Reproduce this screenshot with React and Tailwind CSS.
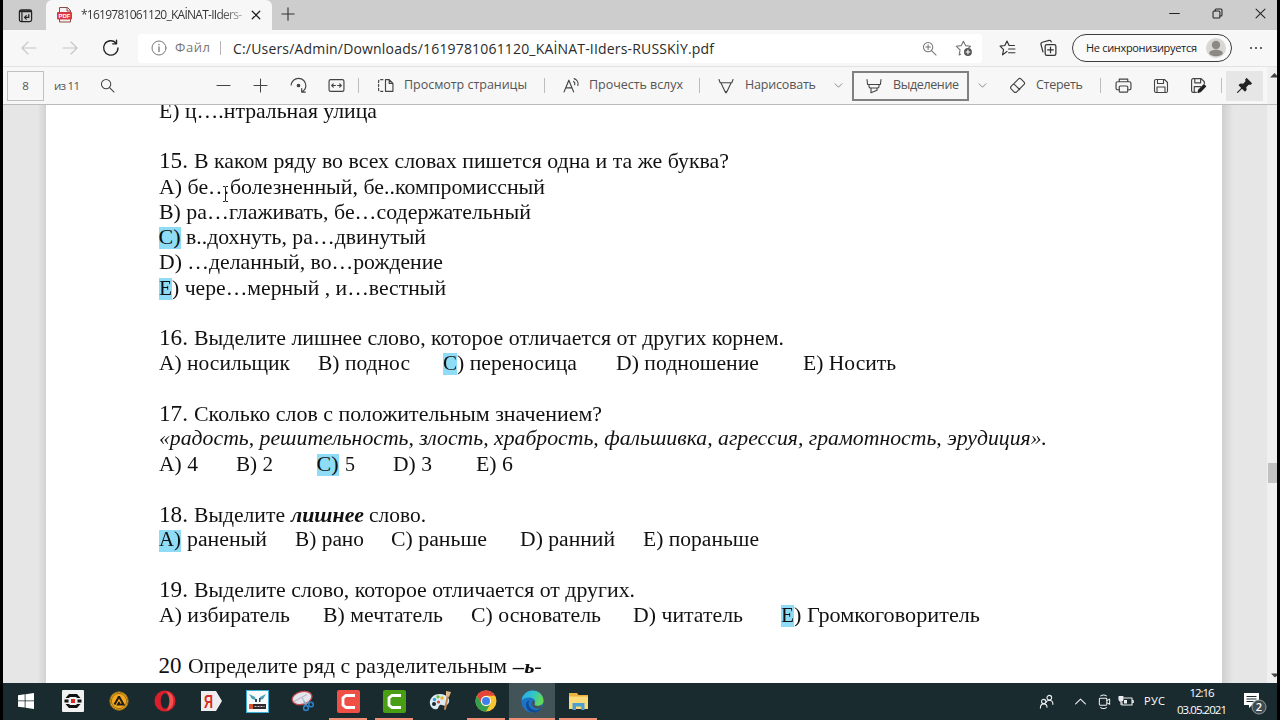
import React, { useLayoutEffect, useRef } from 'react';

const HL = 'bg-[#8fdcf6] leading-[19px] pb-[3px]';

// Fits a run of text to the width given by its class,
// either by letter spacing or by stretching the glyphs
function Run({ className = '', stretch = false, children }) {
  const outer = useRef(null);
  const inner = useRef(null);

  useLayoutEffect(() => {
    const el = inner.current;
    el.style.letterSpacing = '0px';
    el.style.transform = 'none';
    const target = outer.current.clientWidth;
    const natural = el.getBoundingClientRect().width;
    if (stretch) {
      el.style.transform = `scaleX(${target / natural})`;
    } else {
      const gaps = Math.max(el.textContent.length - 1, 1);
      el.style.letterSpacing = `${(target - natural) / gaps}px`;
    }
  }, [children, stretch]);

  return (
    <span ref={outer} className={`block shrink-0 whitespace-pre ${className}`}>
      <span ref={inner} className="inline-block origin-left">{children}</span>
    </span>
  );
}

function Doc({ className, children }) {
  return <Run stretch className={className}>{children}</Run>;
}

function Row({ className = 'text-[22px]', children }) {
  return (
    <div className={`flex h-[25.23px] shrink-0 items-baseline leading-[25.23px] ${className}`}>{children}</div>
  );
}

function Num({ children, className = 'mr-[6px] w-[29px]' }) {
  return <Doc className={`text-[23px] ${className}`}>{children}</Doc>;
}

function Icon({ className = '', size = 16, stroke = '#444', sw = 1.1, children }) {
  return (
    <svg
      className={`block shrink-0 ${className}`}
      width={size}
      height={size}
      viewBox="0 0 16 16"
      fill="none"
      stroke={stroke}
      strokeWidth={sw}
      strokeLinecap="round"
      strokeLinejoin="round"
    >
      {children}
    </svg>
  );
}

function TabBar() {
  return (
    <div className="flex h-[30px] shrink-0 items-end bg-[#cdcdcd]">
      <div className="flex h-full w-[43px] items-center pl-[15px]">
        <Icon size={15} stroke="#222" sw={1.3}>
          <rect x="1.5" y="2" width="13" height="12.5" rx="2" />
          <path d="M2.5 3.5h11" strokeWidth="2" />
          <path d="M4.2 5v9" />
          <path d="M11.5 7v3H7m1.8-1.8L7 10l1.8 1.8" />
        </Icon>
      </div>
      <div className="flex h-[30px] w-[226px] items-center rounded-t-[6px] bg-[#f7f7f7]">
        <svg className="ml-[11px] shrink-0" width="16" height="18" viewBox="0 0 16 18">
          <path d="M2.500 1.500h8l3 3v11.500h-11z" fill="#f5f1f1" stroke="#8b4a4a" />
          <path d="M10 1.500v3.500h3.500" fill="none" stroke="#8b4a4a" />
          <rect x="0" y="6" width="15" height="7.500" rx="1" fill="#d9363e" />
          <text x="7.500" y="11.900" textAnchor="middle" fontSize="6" fontWeight="700" fill="#fff" fontFamily="Liberation Sans, sans-serif">
            PDF
          </text>
        </svg>
        <Run className="ml-[8px] w-[161px] bg-gradient-to-r from-[#333] from-85% to-[#aaa] bg-clip-text text-[12px] text-transparent">
          *1619781061120_KAİNAT-IIders-
        </Run>
        <Icon className="ml-[9px]" size={10} stroke="#222" sw={2}>
          <path d="M2 2l12 12M14 2L2 14" />
        </Icon>
      </div>
      <Icon className="mb-[9px] ml-[9px]" size={14} stroke="#333" sw={1.3}>
        <path d="M8 1v14M1 8h14" />
      </Icon>
      <div className="ml-auto flex h-full items-center pb-[4px]">
        <Icon size={11} stroke="#222" sw={1.6}>
          <path d="M1 8h14" />
        </Icon>
        <Icon className="ml-[32px]" size={11} stroke="#222" sw={1.5}>
          <rect x="1.500" y="4.500" width="10" height="10" rx="1.500" />
          <path d="M4.500 4.500V3a1.500 1.500 0 0 1 1.500-1.500h7A1.500 1.500 0 0 1 14.500 3v7a1.500 1.500 0 0 1-1.500 1.500h-1.500" />
        </Icon>
        <Icon className="ml-[32px] mr-[11px]" size={11} stroke="#222" sw={1.5}>
          <path d="M1.500 1.500l13 13M14.500 1.500l-13 13" />
        </Icon>
      </div>
    </div>
  );
}

function AddressBar() {
  return (
    <div className="flex h-[37px] shrink-0 items-center border-b border-[#e2e2e2] bg-[#f7f7f7]">
      <Icon className="ml-[18px]" stroke="#c6c6c6" sw={1.1}>
        <path d="M15 8H1m6-6L1 8l6 6" />
      </Icon>
      <Icon className="ml-[25px]" stroke="#c6c6c6" sw={1.1}>
        <path d="M1 8h14M9 2l6 6-6 6" />
      </Icon>
      <Icon className="ml-[24px]" size={18} stroke="#222" sw={1.2}>
        <path d="M14.200 8a6.400 6.400 0 1 1-1.800-4.500M12.900 1v3.300H9.500" />
      </Icon>
      <div className="ml-[18px] flex h-[29px] w-[844px] items-center rounded-[3px] bg-white">
        <Icon className="ml-[13px]" stroke="#777" sw={1}>
          <circle cx="8" cy="8" r="7" />
          <path d="M8 7v4.500M8 4.500v.3" strokeWidth="1.300" />
        </Icon>
        <Run className="ml-[8px] w-[35px] text-[13px] text-[#777]">Файл</Run>
        <div className="ml-[10px] h-[14px] w-px bg-[#b5b5b5]" />
        <Run className="ml-[12px] w-[481px] text-[14px] text-[#2b2b2b]">
          C:/Users/Admin/Downloads/1619781061120_KAİNAT-IIders-RUSSKİY.pdf
        </Run>
        <Icon className="ml-[208px]" size={15} stroke="#777" sw={1.1}>
          <circle cx="6.500" cy="6.500" r="5" />
          <path d="M10.200 10.200L15 15M6.500 4v5M4 6.500h5" />
        </Icon>
        <Icon className="ml-[18px]" size={18} stroke="#777" sw={1}>
          <path d="M5 13.500l-1.300.7.800-4.500L1.200 6.500l4.300-.6L7.500 2l2 3.900 4.300.6-1.500 1.300" />
          <circle cx="11.500" cy="11.500" r="3.500" fill="#555" stroke="none" />
          <path d="M11.500 9.800v3.400M9.800 11.500h3.400" stroke="#fff" />
        </Icon>
      </div>
      <Icon className="ml-[17px]" size={17} stroke="#333" sw={1.1}>
        <path d="M7.500 10.800L3.300 14l1-5L1 5.800l4.500-.6L7.500 1l2 4.200h5M9 8.500h6M9 12h6" />
      </Icon>
      <Icon className="ml-[23px]" size={18} stroke="#333" sw={1.1}>
        <rect x="5.500" y="5" width="9.500" height="9.500" rx="1.500" />
        <path d="M10.250 7.200v5M7.700 9.700h5M3.500 11.500L1.800 5c-.3-1.200.2-1.800 1.200-2.100L9 1.300c1-.2 1.600.1 1.900 1.200" />
      </Icon>
      <div className="ml-[15px] flex h-[28px] w-[160px] items-center rounded-full border border-[#3c3c3c] bg-[#fafafa]">
        <Run className="ml-[13px] w-[111px] text-[11px] text-[#222]">Не синхронизируется</Run>
        <svg className="ml-[9px] shrink-0" width="20" height="20" viewBox="0 0 20 20">
          <circle cx="10" cy="10" r="10" fill="#d9d7d3" />
          <circle cx="10" cy="7" r="4.200" fill="#8c8984" />
          <ellipse cx="10" cy="15" rx="6.800" ry="3.300" fill="#8c8984" />
        </svg>
      </div>
      <div className="ml-[18px] flex gap-[3px]">
        <span className="size-[2px] rounded-full bg-[#333]" />
        <span className="size-[2px] rounded-full bg-[#333]" />
        <span className="size-[2px] rounded-full bg-[#333]" />
      </div>
    </div>
  );
}

function Sep({ className }) {
  return <div className={`h-[15px] w-px shrink-0 bg-[#bdbdbd] ${className}`} />;
}

function Toolbar() {
  return (
    <div className="flex h-[38px] shrink-0 items-center border-b border-[#bcbcbc] bg-[#f7f7f7] text-[12.5px] text-[#555]">
      <div className="ml-[4px] flex h-[30px] w-[37px] shrink-0 items-center justify-center border border-[#c0c0c0] text-[11.5px]">8</div>
      <Run className="ml-[10px] w-[26px] text-[11.5px]">из 11</Run>
      <Icon className="ml-[20px]" size={15}>
        <circle cx="6.500" cy="6.500" r="5" />
        <path d="M10.200 10.200L15 15" />
      </Icon>
      <Icon className="ml-[101px]" size={15}>
        <path d="M1 8h14" />
      </Icon>
      <Icon className="ml-[22px]" size={15}>
        <path d="M8 1v14M1 8h14" />
      </Icon>
      <Icon className="ml-[22px]" size={17}>
        <path d="M1 7.500C1.500 3.800 4.500 1.300 8 1.300c4 0 6.900 3 6.900 6.700 0 2.700-1.500 4.800-3.700 6M11 10.800V14.200h3.500" />
        <circle cx="8" cy="8" r="1.200" fill="#444" />
      </Icon>
      <Icon className="ml-[21px]" size={17}>
        <rect x="1" y="2.500" width="14" height="11" rx="1.500" />
        <path d="M7 8H3.500M5 6.500L3.500 8 5 9.500M9 8h3.500M11 6.500L12.500 8 11 9.500" />
      </Icon>
      <Sep className="ml-[13px]" />
      <Icon className="ml-[18px]" size={17}>
        <path d="M8 2.500h3.500L15 6v7.500H8zM11.500 2.500V6H15" />
        <path d="M5.500 2.500H3A1.500 1.500 0 0 0 1.500 4v8A1.500 1.500 0 0 0 3 13.500h2.500" strokeDasharray="2 1.800" />
      </Icon>
      <Run className="ml-[10px] w-[123px]">Просмотр страницы</Run>
      <Sep className="ml-[17px]" />
      <Icon className="ml-[18px]" size={17}>
        <path d="M1 14L5.500 3 10 14M2.600 10.300h5.800M10 4.200c1 .7 1.400 2 1 3.100M10.500 1.500c2.800 1 4.200 3.800 3.500 6.500" />
      </Icon>
      <Run className="ml-[9px] w-[94px]">Прочесть вслух</Run>
      <Sep className="ml-[16px]" />
      <Icon className="ml-[18px]" size={16}>
        <path d="M1 1.500l1.200 3.300h11.600L15 1.500M3 5l4 8.500h2L13 5M7 13.500l1 1.500 1-1.500" />
      </Icon>
      <Run className="ml-[11px] w-[71px]">Нарисовать</Run>
      <Icon className="ml-[18px]" size={9} stroke="#777" sw={1.5}>
        <path d="M2 5l6 6 6-6" />
      </Icon>
      <div className="ml-[9px] flex h-[30px] w-[117px] shrink-0 items-center border-2 border-[#808080]">
        <Icon className="ml-[12px]" size={16}>
          <path d="M1 1.500l.6 5h12.800l.6-5M3 6.500v2.200c0 .8.800 1.300 2 1.300h6c1.200 0 2-.5 2-1.300V6.500M5 10v4.800l6-2.500V10" />
        </Icon>
        <Run className="ml-[11px] w-[66px]">Выделение</Run>
      </div>
      <Icon className="ml-[9px]" size={9} stroke="#777" sw={1.5}>
        <path d="M2 5l6 6 6-6" />
      </Icon>
      <Icon className="ml-[22px]" size={17}>
        <path d="M2 8.800L9 1.800c.7-.7 1.500-.7 2.200 0l3 3c.7.700.7 1.500 0 2.200l-7.400 7.400H5.200L2 11.200c-.7-.8-.7-1.600 0-2.400zM4.500 6.500l5.500 5.300" />
      </Icon>
      <Run className="ml-[10px] w-[47px]">Стереть</Run>
      <Sep className="ml-[17px]" />
      <Icon className="ml-[14px]" size={17}>
        <path d="M4 4.500V2h8v2.500M4 12H2.500A1.500 1.500 0 0 1 1 10.500V6a1.500 1.500 0 0 1 1.500-1.500h11A1.500 1.500 0 0 1 15 6v4.500a1.500 1.500 0 0 1-1.500 1.500H12" />
        <rect x="4" y="8.500" width="8" height="5.800" rx="1" />
      </Icon>
      <Icon className="ml-[21px]" size={16}>
        <path d="M3 1.500h8.500l3 3V13a1.500 1.500 0 0 1-1.500 1.500H3A1.500 1.500 0 0 1 1.500 13V3A1.500 1.500 0 0 1 3 1.500zM4.500 1.500v4h6v-4M4 14.500V9h8v5.500" />
      </Icon>
      <Icon className="ml-[21px]" size={17}>
        <path d="M6 14.500H3A1.500 1.500 0 0 1 1.500 13V3A1.500 1.500 0 0 1 3 1.500h7.500l3 3V6M4.500 1.500v4h5.500v-4M4 14.500V9h6" />
        <path d="M7.500 14.500l.6-2.200 5-5 1.600 1.600-5 5z" fill="#222" stroke="#222" />
      </Icon>
      <Sep className="ml-[14px]" />
      <div className="ml-[4px] flex h-[30px] w-[37px] shrink-0 items-center justify-center bg-[#e6e6e6]">
        <Icon size={17} stroke="#222" sw={1}>
          <path d="M10 1.500L14.500 6l-1 .8-1.500-.3-2.800 2.800.3 2.700-1 1.200L3 7.700l1.200-1 2.700.2L9.500 4.200 9.200 2.500z" fill="#222" />
          <path d="M5.500 10.500l-4 4" />
        </Icon>
      </div>
      <div className="ml-auto flex h-full w-[10px] items-start justify-end bg-[#f0f0f0] pt-[6px]">
        <svg width="7" height="5" viewBox="0 0 7 5">
          <path d="M0 4.500L4.500 0 7 2.500v2z" fill="#444" />
        </svg>
      </div>
    </div>
  );
}

function PdfPage() {
  return (
    <div className="flex min-h-0 flex-1 bg-[#e6e6e6]">
      <div className="w-[43px] shrink-0 bg-gradient-to-r from-[#e6e6e6] from-80% to-[#d3d3d3]" />
      <div className="relative w-[1176px] shrink-0 overflow-hidden bg-white pl-[112.5px] font-['Liberation_Serif','Times_New_Roman',serif] text-[#111]">
        <div className="-mt-[7px] flex flex-col">
          <Row>
            <Doc className="w-[218px]">Е) ц….нтральная улица</Doc>
          </Row>
          <Row />
          <Row className="text-[21px]">
            <Num>15.</Num>
            <Doc className="w-[535px]">В каком ряду во всех словах пишется одна и та же буква?</Doc>
          </Row>
          <Row>
            <Doc className="w-[386px]">А) бе…болезненный, бе..компромиссный</Doc>
          </Row>
          <Row>
            <Doc className="w-[372px]">В) ра…глаживать, бе…содержательный</Doc>
          </Row>
          <Row>
            <Doc className={`w-[22px] ${HL}`}>С)</Doc>
            <Doc className="ml-[5px] w-[240px]">в..дохнуть, ра…двинутый</Doc>
          </Row>
          <Row>
            <Doc className="w-[284px]">D) …деланный, во…рождение</Doc>
          </Row>
          <Row>
            <Doc className={`w-[13px] ${HL}`}>Е</Doc>
            <Doc className="w-[274px]">) чере…мерный , и…вестный</Doc>
          </Row>
          <Row />
          <Row className="text-[21px]">
            <Num>16.</Num>
            <Doc className="w-[590px]">Выделите лишнее слово, которое отличается от других корнем.</Doc>
          </Row>
          <Row>
            <Doc className="w-[131px]">А) носильщик</Doc>
            <Doc className="ml-[28px] w-[92px]">В) поднос</Doc>
            <Doc className={`ml-[33px] w-[14px] ${HL}`}>С</Doc>
            <Doc className="w-[120px]">) переносица</Doc>
            <Doc className="ml-[39px] w-[143px]">D) подношение</Doc>
            <Doc className="ml-[44px] w-[93px]">Е) Носить</Doc>
          </Row>
          <Row />
          <Row className="text-[21px]">
            <Num>17.</Num>
            <Doc className="w-[408px]">Сколько слов с положительным значением?</Doc>
          </Row>
          <Row className="text-[21px] italic">
            <Doc className="w-[888px]">
              «радость, решительность, злость, храбрость, фальшивка, агрессия, грамотность, эрудиция».
            </Doc>
          </Row>
          <Row>
            <Doc className="w-[39px]">А) 4</Doc>
            <Doc className="ml-[38px] w-[37px]">В) 2</Doc>
            <Doc className={`ml-[44px] w-[22px] ${HL}`}>С)</Doc>
            <Doc className="ml-[6px] w-[10px]">5</Doc>
            <Doc className="ml-[38px] w-[39px]">D) 3</Doc>
            <Doc className="ml-[44px] w-[37px]">Е) 6</Doc>
          </Row>
          <Row />
          <Row className="text-[21px]">
            <Num>18.</Num>
            <Doc className="w-[91px]">Выделите</Doc>
            <Doc className="ml-[6px] w-[73px] font-bold italic">лишнее</Doc>
            <Doc className="ml-[5px] w-[57px]">слово.</Doc>
          </Row>
          <Row className="text-[20px]">
            <Doc className={`w-[22px] ${HL}`}>А)</Doc>
            <Doc className="ml-[6px] w-[80px]">раненый</Doc>
            <Doc className="ml-[28px] w-[69px]">В) рано</Doc>
            <Doc className="ml-[27px] w-[96px]">С) раньше</Doc>
            <Doc className="ml-[33px] w-[95px]">D) ранний</Doc>
            <Doc className="ml-[28px] w-[116px]">Е) пораньше</Doc>
          </Row>
          <Row />
          <Row className="text-[21px]">
            <Num>19.</Num>
            <Doc className="w-[441px]">Выделите слово, которое отличается от других.</Doc>
          </Row>
          <Row>
            <Doc className="w-[131px]">А) избиратель</Doc>
            <Doc className="ml-[33px] w-[120px]">В) мечтатель</Doc>
            <Doc className="ml-[28px] w-[130px]">С) основатель</Doc>
            <Doc className="ml-[32px] w-[110px]">D) читатель</Doc>
            <Doc className={`ml-[38px] w-[13px] ${HL}`}>Е</Doc>
            <Doc className="w-[186px]">) Громкоговоритель</Doc>
          </Row>
          <Row />
          <Row className="text-[21px]">
            <Num className="mr-[6px] w-[23px]">20</Num>
            <Doc className="w-[319px]">Определите ряд с разделительным</Doc>
            <Doc className="ml-[6px] w-[29px] text-[19px] font-bold italic">–ь-</Doc>
          </Row>
        </div>
        {/* text cursor */}
        <svg className="absolute left-[176px] top-[81px]" width="8" height="16" viewBox="0 0 8 16" fill="none" stroke="#222">
          <path d="M1 .5h2l.5.5.5-.5h2M3.500 1v14M1 15.500h2l.5-.5.5.5h2" />
        </svg>
      </div>
      <div className="flex-1 bg-gradient-to-r from-[#cfcfcf] to-[#e6e6e6] to-25%" />
      <div className="flex w-[10px] shrink-0 flex-col items-end justify-between bg-[#f0f0f0] pb-[5px] pt-[358px]">
        <div className="h-[20px] w-[9px] bg-[#c1c1c1]" />
        <svg width="6" height="5" viewBox="0 0 6 5">
          <path d="M0 .5h6v2L4 4.500z" fill="#444" />
        </svg>
      </div>
    </div>
  );
}

function Task({ running, active, children }) {
  return (
    <div className={`flex h-full w-[46px] shrink-0 flex-col items-center justify-between ${active ? 'bg-[#435459]' : ''}`}>
      <div className="flex flex-1 items-center justify-center pt-[1px]">{children}</div>
      <div className={`h-[2px] shrink-0 ${active ? 'w-full' : 'w-[38px]'} ${running ? 'bg-[#f08f76]' : ''}`} />
    </div>
  );
}

function Camtasia({ fill }) {
  return (
    <svg width="23" height="23" viewBox="0 0 23 23">
      <rect width="23" height="23" rx="2" fill={fill} />
      <path d="M18 5.500H9L6 8v7l3 2.500h9" fill="none" stroke="#fff" strokeWidth="2.800" />
    </svg>
  );
}

function Taskbar() {
  return (
    <div className="flex h-[37px] shrink-0 bg-[#1a2b30]">
      <Task>
        <svg width="16" height="16" viewBox="0 0 16 16" fill="#fff">
          <path d="M0 2.200l6.700-.9v6.200H0zM7.500 1.200L16 0v7.500H7.500zM0 8.300h6.700v6.300L0 13.700zM7.500 8.300H16V16l-8.500-1.200z" />
        </svg>
      </Task>
      <Task>
        <svg className="ml-[2px]" width="22" height="22" viewBox="0 0 22 22">
          <rect width="22" height="22" rx="1" fill="#f1f1f1" />
          <path d="M7 4h8l3.500 4h-3.500l-1-1H8L7 8H3.500zM7 18h8l3.500-4h-3.500l-1 1H8l-1-1H3.500z" fill="#111" />
          <path d="M2.500 9.500h4v3h-4zM15.500 9.500h4v3h-4z" fill="#111" />
          <rect x="9" y="9" width="4" height="4" fill="#d42a2a" />
        </svg>
      </Task>
      <Task>
        <svg className="ml-[2px]" width="20" height="20" viewBox="0 0 20 20">
          <circle cx="10" cy="10" r="9.200" fill="#f5a81c" stroke="#8c691e" strokeWidth="1" />
          <circle cx="10" cy="10" r="7.600" fill="none" stroke="#5d4415" strokeWidth=".6" />
          <path d="M10 5.500l4.500 8H9l1.500-2.500M10 5.500l-4.500 8" fill="none" stroke="#1c1c1c" strokeWidth="2" />
        </svg>
      </Task>
      <Task>
        <svg className="ml-[2px]" width="22" height="22" viewBox="0 0 22 22">
          <ellipse cx="11" cy="11" rx="10.500" ry="10.500" fill="#d91f2c" />
          <path d="M12 1a10.500 10.500 0 0 1 0 20c4-2 5-16 0-20z" fill="#f0554d" />
          <ellipse cx="11" cy="11" rx="4.300" ry="7.800" fill="#1a2b30" />
        </svg>
      </Task>
      <Task>
        <svg className="ml-[2px]" width="22" height="22" viewBox="0 0 22 22">
          <path d="M1 1h15l6 10-6 10H1z" fill="#eee" />
          <text x="4" y="18" fontSize="19" fontWeight="700" fill="#d92b22" fontFamily="Liberation Sans, sans-serif" textLength="9" lengthAdjust="spacingAndGlyphs">
            Я
          </text>
        </svg>
      </Task>
      <Task>
        <svg className="ml-[2px]" width="23" height="23" viewBox="0 0 23 23">
          <rect x=".5" y=".5" width="22" height="22" fill="#f7fbfc" stroke="#3daed6" />
          <path d="M3 4l6 3 1 3-4-1zM20 4l-6 3-1 3 4-1z" fill="#4a9fb8" />
          <path d="M9 9h2v3H9zM13 8h1.500v4H13z" fill="#284e60" />
          <rect x="3" y="14" width="17" height="5" fill="#30282c" />
          <path d="M3 14h4v5H3z" fill="#d7562c" />
          <path d="M8.500 16.500h10" stroke="#c9c9c9" strokeDasharray="2 1" />
        </svg>
      </Task>
      <Task>
        <svg className="ml-[2px]" width="24" height="22" viewBox="0 0 24 22">
          <ellipse cx="11" cy="8" rx="10" ry="6.300" fill="#e4e5ec" stroke="#c7494e" strokeWidth="1.300" transform="rotate(-14 11 8)" />
          <path d="M3 11.500l13-7M14 14L11 7" stroke="#b9bccb" strokeWidth="1.300" />
          <path d="M13 11l1.500 4M18 11l-3 3.500" stroke="#8fa6bd" strokeWidth="1.200" />
          <circle cx="15" cy="18" r="2.400" fill="none" stroke="#2f7fc2" strokeWidth="1.600" />
          <circle cx="20" cy="14.500" r="2.300" fill="none" stroke="#2f7fc2" strokeWidth="1.600" />
        </svg>
      </Task>
      <Task running>
        <Camtasia fill="#ef4f45" />
      </Task>
      <Task running>
        <Camtasia fill="#4a9e13" />
      </Task>
      <Task>
        <svg width="23" height="22" viewBox="0 0 23 22">
          <path d="M11 4C4 4 0 9 1 14c.8 4 4 6 7 5 2-.6 1-3 3-4s4 2 7 0c5-4 1-11-7-11z" fill="#dcebf3" />
          <circle cx="5" cy="14" r="2" fill="#1a2b30" />
          <circle cx="5.500" cy="9.500" r="1.700" fill="#3b9fe0" />
          <circle cx="9" cy="6.800" r="1.600" fill="#6bbd45" />
          <circle cx="13" cy="8" r="1.700" fill="#e8b425" />
          <circle cx="9.500" cy="12" r="1.600" fill="#d84545" />
          <path d="M19 5l-3 14" stroke="#c4884f" strokeWidth="2" strokeLinecap="round" />
          <path d="M17 1l5 1-2 5-3-1z" fill="#e2b88a" />
        </svg>
      </Task>
      <Task running>
        <svg width="22" height="22" viewBox="0 0 22 22">
          <circle cx="11" cy="11" r="10.500" fill="#f9c631" />
          <path d="M1.900 5.750A10.500 10.500 0 0 1 20.100 5.750H11a5.250 5.250 0 0 0-4.550 7.900z" fill="#e2443a" />
          <path d="M1.900 5.750A10.500 10.500 0 0 0 11 21.500l4.550-7.900a5.250 5.250 0 0 1-9.100 0z" fill="#34a04e" />
          <circle cx="11" cy="11" r="5" fill="#fff" />
          <circle cx="11" cy="11" r="4" fill="#3f80ea" />
        </svg>
      </Task>
      <Task running active>
        <svg width="23" height="23" viewBox="0 0 24 24">
          <defs>
            <linearGradient id="edgeTop" x1="0" y1="0" x2="1" y2=".4">
              <stop offset="0" stopColor="#2aa7e5" />
              <stop offset=".5" stopColor="#2fc3cf" />
              <stop offset="1" stopColor="#63d957" />
            </linearGradient>
          </defs>
          <circle cx="12" cy="12" r="11.500" fill="#1c74c9" />
          <path d="M.6 11C1.500 4.500 6.500.5 12 .5 18.500.5 23.500 5.500 23.500 11c0 3.500-2.500 5.600-5.700 5.600-3 0-4.300-1-3.600-2.100 1.300-1.900.8-5.800-3.600-6.500C6 7.300 2 9 .6 11z" fill="url(#edgeTop)" />
          <path d="M9 10.500c-3 4 0 10 6 10.500 2.500.2 5-.8 6.500-2.500-3.500 7-14 6.500-16-1-.8-3.500.8-6 3.500-7z" fill="#124a94" />
          <path d="M14.200 14.500c-.7 1.100.6 2.100 3.600 2.100 2 0 3.800-.8 4.800-2.200l-1.300 4c-5 2.500-11-.5-10.300-5.200.2-1 .8-2 1.600-2.500 1.500.7 2.200 2.600 1.600 3.800z" fill="#435459" />
        </svg>
      </Task>
      <Task running>
        <svg width="21" height="19" viewBox="0 0 21 19">
          <path d="M1 1h8l1.500 2H20v14H1z" fill="#e8b23c" />
          <path d="M1 4.500h19V17H1z" fill="#fbda7a" />
          <path d="M4.500 18v-7h12v7h-3.300v-3.500H8V18z" fill="#4d9fd1" />
        </svg>
      </Task>
      <div className="ml-auto flex items-center pb-[1px] text-white">
        <Icon size={15} stroke="#eee" sw={1.2}>
          <circle cx="11" cy="4" r="2.500" />
          <circle cx="5" cy="8" r="2.300" />
          <path d="M1.500 15c0-3 1.300-4.500 3.500-4.500S8.500 12 8.500 14M7.500 9c.5-1.500 1.800-2.300 3.500-2.300 2.400 0 3.800 1.500 3.800 4.300" />
        </Icon>
        <Icon className="ml-[20px]" size={13} stroke="#eee" sw={1.4}>
          <path d="M2 11l6-6 6 6" />
        </Icon>
        <Icon className="ml-[10px]" size={15} stroke="#eee" sw={1.1}>
          <rect x="2.500" y="4.500" width="8" height="7.500" rx="1" />
          <path d="M10.500 7l3-1.500V11l-3-1.500M4 2c1.500-1 4.500-1 6 0M4 14.500c1.500 1 4.500 1 6 0" />
        </Icon>
        <Icon className="ml-[6px]" size={16} stroke="#eee" sw={1.1}>
          <path d="M6 5h8v7H4V9.500M14 7.500h1.300v2H14" />
          <path d="M1 3.500h4v2.500a2 2 0 0 1-4 0zM3 8v3.500" fill="#eee" />
          <path d="M6 7h3v3.500H6z" fill="#eee" stroke="none" />
        </Icon>
        <Run className="ml-[10px] w-[21px] text-[11px]">РУС</Run>
        <div className="ml-[12px] flex w-[50px] flex-col items-center text-[11.5px] leading-[17px]">
          <Run className="w-[25px]">12:16</Run>
          <Run className="w-[50px]">03.05.2021</Run>
        </div>
        <svg className="ml-[16px] mr-[9px] mt-[4px] shrink-0" width="25" height="25" viewBox="0 0 25 25">
          <path d="M1 2h15v12H9l-3 3v-3H1z" fill="#fff" />
          <path d="M3.500 5.500h10M3.500 8h10M3.500 10.500h7" stroke="#1a2b30" />
          <circle cx="16" cy="16" r="7" fill="#404b4f" stroke="#929a9c" />
          <text x="16" y="20" textAnchor="middle" fontSize="11" fontWeight="600" fill="#fff" fontFamily="Open Sans, sans-serif">
            2
          </text>
        </svg>
      </div>
    </div>
  );
}

export default function App() {
  return (
    <div className="flex h-[720px] w-[1280px] flex-col overflow-hidden border-x-[3px] border-black bg-white font-['Open_Sans','Noto_Sans',sans-serif]">
      <TabBar />
      <AddressBar />
      <Toolbar />
      <PdfPage />
      <Taskbar />
    </div>
  );
}
